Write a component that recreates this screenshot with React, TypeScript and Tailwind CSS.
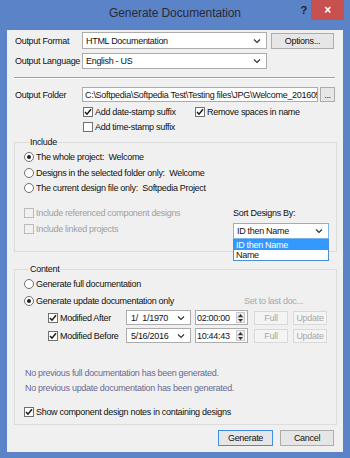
import type { ReactNode } from 'react'

function Chevron() {
  return (
    <svg width="8" height="6" viewBox="0 0 8 6" className="shrink-0">
      <polyline points="1,1.5 4,4.5 7,1.5" fill="none" stroke="#333" strokeWidth="1.2" />
    </svg>
  )
}

function Check({ checked, disabled }: { checked?: boolean; disabled?: boolean }) {
  return (
    <span
      className={`flex h-[10px] w-[10px] shrink-0 items-center justify-center border ${
        disabled ? 'border-[#bcbcbc] bg-[#f0f0f0]' : 'border-[#707070] bg-white'
      }`}
    >
      {checked && (
        <svg width="8" height="8" viewBox="0 0 8 8">
          <polyline points="1,4 3,6.2 7,1.2" fill="none" stroke="#1a1a1a" strokeWidth="1.5" />
        </svg>
      )}
    </span>
  )
}

function Radio({ selected }: { selected?: boolean }) {
  return (
    <span className="flex h-[10px] w-[10px] shrink-0 items-center justify-center rounded-full border border-[#707070] bg-white">
      {selected && <span className="h-[4px] w-[4px] rounded-full bg-[#222]" />}
    </span>
  )
}

function CheckRow({ label, checked, disabled, className = '' }: { label: string; checked?: boolean; disabled?: boolean; className?: string }) {
  return (
    <div className={`flex h-[10px] items-center gap-[2px] ${className}`}>
      <Check checked={checked} disabled={disabled} />
      <span className={disabled ? 'text-[#a0a0a0]' : ''}>{label}</span>
    </div>
  )
}

function RadioRow({ children, selected, className = '' }: { children: ReactNode; selected?: boolean; className?: string }) {
  return (
    <div className={`flex h-[10px] items-center gap-[2px] ${className}`}>
      <Radio selected={selected} />
      <span>{children}</span>
    </div>
  )
}

function Combo({ value, className = '' }: { value: string; className?: string }) {
  return (
    <div className={`flex items-center justify-between border border-[#acacac] bg-white pl-[3px] pr-[5px] ${className}`}>
      <span>{value}</span>
      <Chevron />
    </div>
  )
}

function Btn({ label, disabled, primary, className = '' }: { label: string; disabled?: boolean; primary?: boolean; className?: string }) {
  return (
    <div
      className={`flex items-center justify-center border ${
        disabled
          ? 'border-[#d9d9d9] bg-[#f4f4f4] text-[#a8a8a8]'
          : primary
            ? 'border-[#3d8ee6] bg-[#e6e6e6]'
            : 'border-[#acacac] bg-[#e6e6e6]'
      } ${className}`}
    >
      {label}
    </div>
  )
}

function Spin() {
  return (
    <div className="flex h-[11px] w-[9px] flex-col border border-[#c8c8c8] bg-[#ececec]">
      <div className="flex flex-1 items-center justify-center">
        <svg width="5" height="3" viewBox="0 0 5 3"><polygon points="0,3 2.5,0 5,3" fill="#333" /></svg>
      </div>
      <div className="flex flex-1 items-center justify-center border-t border-[#c8c8c8]">
        <svg width="5" height="3" viewBox="0 0 5 3"><polygon points="0,0 2.5,3 5,0" fill="#333" /></svg>
      </div>
    </div>
  )
}

function DateRow({ label, date, time }: { label: string; date: string; time: string }) {
  return (
    <div className="flex h-[15px] items-center">
      <div className="flex w-[78px] items-center gap-[2px]">
        <Check checked />
        <span>{label}</span>
      </div>
      <div className="flex h-[15px] w-[65px] items-center justify-between border border-[#acacac] bg-white pl-[4px] pr-[5px]">
        <span className="whitespace-pre">{date}</span>
        <Chevron />
      </div>
      <div className="ml-[4px] flex h-[15px] w-[53px] items-center justify-between border border-[#acacac] bg-white pl-[1px] pr-[2px]">
        <span>{time}</span>
        <Spin />
      </div>
      <Btn label="Full" disabled className="ml-[6px] h-[14px] w-[34px]" />
      <Btn label="Update" disabled className="ml-[5px] h-[14px] w-[34px]" />
    </div>
  )
}

export default function App() {
  return (
    <div className="flex h-[458px] w-[350px] flex-col bg-[#5b84c8] font-['Liberation_Sans',Arial,sans-serif] text-[9px] leading-[10px] tracking-[-0.3px] text-[#111]">
      <div className="grid h-[30px] shrink-0 grid-cols-[56px_1fr_56px] items-start">
        <div />
        <div className="flex h-[26px] items-center justify-center text-[12px] tracking-[-0.1px] text-[#2a2a35]">
          Generate Documentation
        </div>
        <div className="flex items-start justify-end pr-[6px]">
          <span className="mr-[4px] mt-[5px] text-[11px] font-bold text-[#222]">?</span>
          <div className="flex h-[20px] w-[33px] items-center justify-center bg-[#c75050] text-[12px] font-bold text-white">×</div>
        </div>
      </div>

      <div className="mx-[7px] mb-[6px] flex flex-1 flex-col bg-[#f0f0f0] pt-[2px]">
        <div className="flex h-[17px] items-center pl-[8px]">
          <span className="w-[67px]">Output Format</span>
          <Combo value="HTML Documentation" className="h-[17px] w-[185px]" />
          <Btn label="Options..." className="ml-[4px] h-[16px] w-[63px]" />
        </div>
        <div className="mt-[4px] flex h-[16px] items-center pl-[8px]">
          <span className="w-[67px]">Output Language</span>
          <Combo value="English - US" className="h-[16px] w-[185px]" />
        </div>

        <div className="ml-[7px] mt-[8px] w-[321px] border-t border-b border-t-[#a0a0a0] border-b-white" />

        <div className="mt-[8px] flex h-[15px] items-center pl-[8px]">
          <span className="w-[67px]">Output Folder</span>
          <div className="flex h-[15px] w-[236px] items-center overflow-hidden whitespace-nowrap border border-[#acacac] bg-white pl-[2px]">
            <span className="block w-[232px] overflow-hidden">C:\Softpedia\Softpedia Test\Testing files\JPG\Welcome_201605</span>
          </div>
          <Btn label="..." className="ml-[2px] h-[15px] w-[15px]" />
        </div>
        <div className="mt-[5px] flex pl-[76px]">
          <CheckRow label="Add date-stamp suffix" checked className="w-[112px]" />
          <CheckRow label="Remove spaces in name" checked />
        </div>
        <CheckRow label="Add time-stamp suffix" className="mt-[5px] pl-[76px]" />

        <fieldset className="ml-[7px] mt-[5px] w-[323px] border border-[#dcdcdc] pb-[12px] pl-[9px]">
          <legend className="ml-[5px] px-[1px]">Include</legend>
          <RadioRow selected className="mt-[5px]">The whole project:&nbsp; Welcome</RadioRow>
          <RadioRow className="mt-[6px]">Designs in the selected folder only:&nbsp; Welcome</RadioRow>
          <RadioRow className="mt-[5px]">The current design file only:&nbsp; Softpedia Project</RadioRow>
          <div className="mt-[15px] flex">
            <div className="flex flex-1 flex-col">
              <CheckRow label="Include referenced component designs" disabled />
              <CheckRow label="Include linked projects" disabled className="mt-[6px]" />
            </div>
            <div className="relative mr-[7px] flex w-[96px] flex-col">
              <span className="h-[10px]">Sort Designs By:</span>
              <div className="mt-[5px] flex h-[16px] items-center justify-between border border-[#7eb4ea] bg-white pl-[3px] pr-[5px]">
                <span>ID then Name</span>
                <Chevron />
              </div>
              <div className="absolute left-0 top-full z-10 flex w-[96px] flex-col border border-[#4a8ed8] bg-white">
                <span className="flex h-[10px] items-center bg-[#3399ff] pl-[2px] text-white">ID then Name</span>
                <span className="flex h-[10px] items-center pl-[2px]">Name</span>
              </div>
            </div>
          </div>
        </fieldset>

        <fieldset className="ml-[7px] mt-[12px] w-[323px] border border-[#dcdcdc] pb-[7px] pl-[9px]">
          <legend className="ml-[5px] px-[1px]">Content</legend>
          <RadioRow className="mt-[5px]">Generate full documentation</RadioRow>
          <div className="mt-[7px] flex h-[10px] items-center">
            <RadioRow selected className="w-[220px]">Generate update documentation only</RadioRow>
            <span className="text-[#a8a8a8]">Set to last doc...</span>
          </div>
          <div className="mt-[4px] flex flex-col gap-[3px] pl-[24px]">
            <DateRow label="Modified After" date="1/  1/1970" time="02:00:00" />
            <DateRow label="Modified Before" date="5/16/2016" time="10:44:43" />
          </div>
          <div className="mt-[25px] h-[10px] pl-[1px] text-[#6a6a92]">No previous full documentation has been generated.</div>
          <div className="mt-[5px] h-[10px] pl-[1px] text-[#6a6a92]">No previous update documentation has been generated.</div>
          <CheckRow label="Show component design notes in containing designs" checked className="mt-[14px]" />
        </fieldset>

        <div className="mr-[9px] mt-[5px] flex justify-end gap-[7px]">
          <Btn label="Generate" primary className="h-[16px] w-[55px]" />
          <Btn label="Cancel" className="h-[16px] w-[54px]" />
        </div>
      </div>
    </div>
  )
}
